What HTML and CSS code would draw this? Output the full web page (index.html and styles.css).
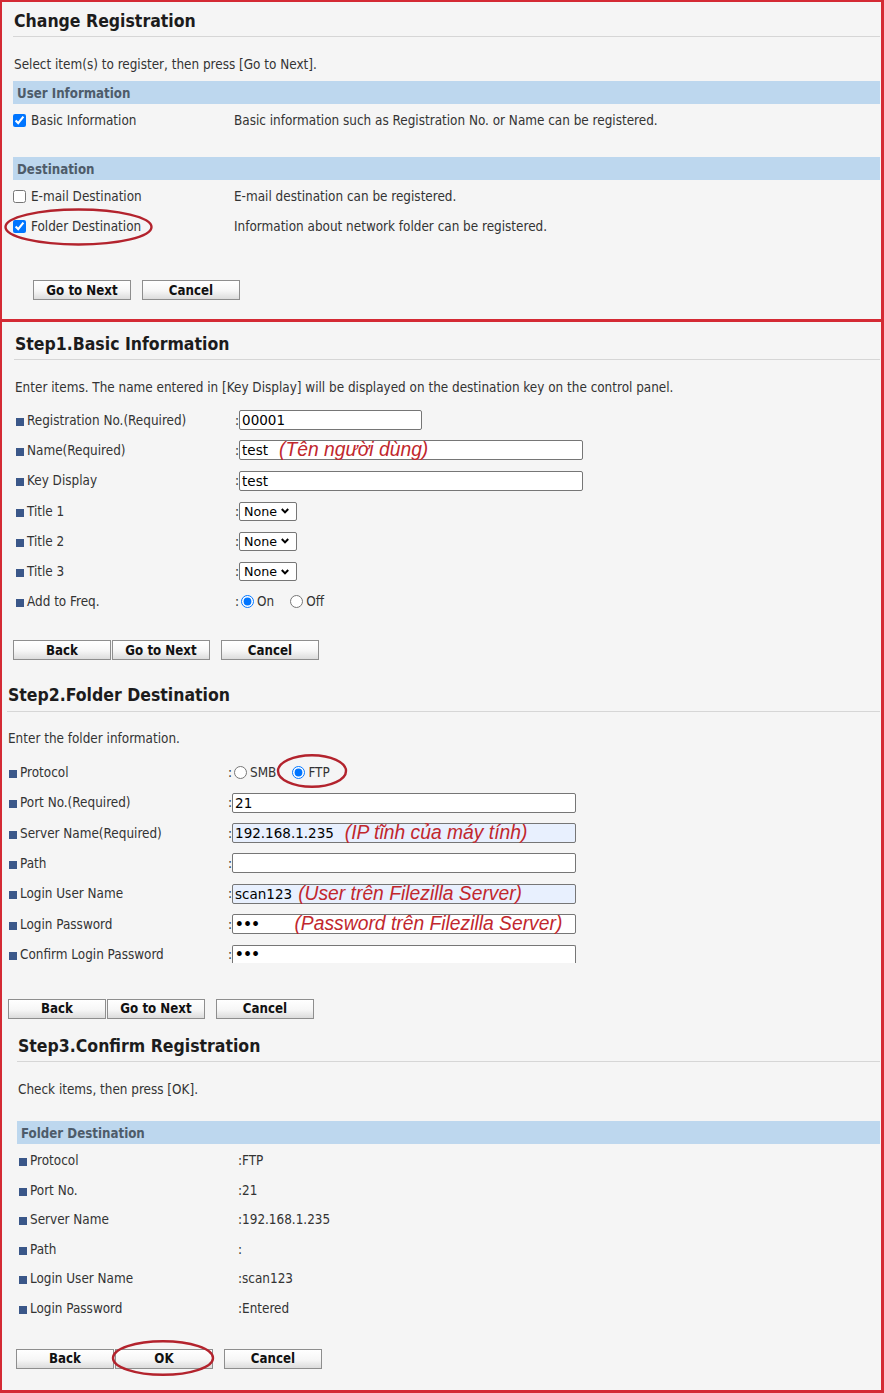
FILE: index.html
```html
<!DOCTYPE html>
<html lang="en">
<head>
<meta charset="utf-8">
<title>Change Registration</title>
<link rel="stylesheet" href="styles.css">
</head>
<body>
<div class="frame frame1">
  <div class="title t1">Change Registration</div>
  <div class="rule r1"></div>
  <div class="intro i1">Select item(s) to register, then press [Go to Next].</div>
  <div class="bar b1">User Information</div>
  <div class="sel-row first">
    <label class="sel-lbl"><input type="checkbox" checked>Basic Information</label>
    <span>Basic information such as Registration No. or Name can be registered.</span>
  </div>
  <div class="bar b2">Destination</div>
  <div class="sel-row first">
    <label class="sel-lbl"><input type="checkbox">E-mail Destination</label>
    <span>E-mail destination can be registered.</span>
  </div>
  <div class="sel-row">
    <label class="sel-lbl"><input type="checkbox" checked>Folder Destination</label>
    <span>Information about network folder can be registered.</span>
  </div>
  <div class="btns bt0">
    <button class="btn">Go to Next</button>
    <button class="btn gap">Cancel</button>
  </div>
  <svg class="ring ring1" viewBox="0 0 149 38"><ellipse cx="74.5" cy="19" rx="73" ry="17.5"/></svg>
</div>

<div class="frame frame2">
  <section class="step s1">
    <div class="title">Step1.Basic Information</div>
    <div class="rule"></div>
    <div class="intro">Enter items. The name entered in [Key Display] will be displayed on the destination key on the control panel.</div>
    <div class="rows rows1">
      <div class="f-row"><span class="lbl"><i class="sq"></i>Registration No.(Required)</span><span class="colon">:</span><span class="field w183">00001</span></div>
      <div class="f-row"><span class="lbl"><i class="sq"></i>Name(Required)</span><span class="colon">:</span><span class="field w344">test<span class="ann m11">(Tên người dùng)</span></span></div>
      <div class="f-row"><span class="lbl"><i class="sq"></i>Key Display</span><span class="colon">:</span><span class="field w344">test</span></div>
      <div class="f-row"><span class="lbl"><i class="sq"></i>Title 1</span><span class="colon">:</span><span class="select">None<svg viewBox="0 0 8 6"><path d="M0.8 1L4 4.4L7.2 1"/></svg></span></div>
      <div class="f-row"><span class="lbl"><i class="sq"></i>Title 2</span><span class="colon">:</span><span class="select">None<svg viewBox="0 0 8 6"><path d="M0.8 1L4 4.4L7.2 1"/></svg></span></div>
      <div class="f-row"><span class="lbl"><i class="sq"></i>Title 3</span><span class="colon">:</span><span class="select">None<svg viewBox="0 0 8 6"><path d="M0.8 1L4 4.4L7.2 1"/></svg></span></div>
      <div class="f-row"><span class="lbl"><i class="sq"></i>Add to Freq.</span><span class="colon">:</span><label class="radio"><input type="radio" name="freq" checked>On</label><label class="radio"><input type="radio" name="freq">Off</label></div>
    </div>
    <div class="btns bt1">
      <button class="btn">Back</button>
      <button class="btn adj">Go to Next</button>
      <button class="btn gap">Cancel</button>
    </div>
  </section>

  <section class="step s2">
    <div class="title">Step2.Folder Destination</div>
    <div class="rule"></div>
    <div class="intro">Enter the folder information.</div>
    <div class="rows rows2">
      <div class="f-row"><span class="lbl"><i class="sq"></i>Protocol</span><span class="colon">:</span><label class="radio"><input type="radio" name="proto">SMB</label><label class="radio"><input type="radio" name="proto" checked>FTP</label></div>
      <div class="f-row"><span class="lbl"><i class="sq"></i>Port No.(Required)</span><span class="colon">:</span><span class="field w344">21</span></div>
      <div class="f-row"><span class="lbl"><i class="sq"></i>Server Name(Required)</span><span class="colon">:</span><span class="field w344 auto">192.168.1.235<span class="ann m11">(IP tĩnh của máy tính)</span></span></div>
      <div class="f-row"><span class="lbl"><i class="sq"></i>Path</span><span class="colon">:</span><span class="field w344"></span></div>
      <div class="f-row"><span class="lbl"><i class="sq"></i>Login User Name</span><span class="colon">:</span><span class="field w344 auto">scan123<span class="ann m6">(User trên Filezilla Server)</span></span></div>
      <div class="f-row"><span class="lbl"><i class="sq"></i>Login Password</span><span class="colon">:</span><span class="field w344"><span class="dots">•••</span><span class="ann m35">(Password trên Filezilla Server)</span></span></div>
      <div class="f-row"><span class="lbl"><i class="sq"></i>Confirm Login Password</span><span class="colon">:</span><span class="field w344 clip"><span class="dots">•••</span></span></div>
    </div>
    <div class="btns bt2">
      <button class="btn">Back</button>
      <button class="btn adj">Go to Next</button>
      <button class="btn gap">Cancel</button>
    </div>
  </section>

  <section class="step s3">
    <div class="title">Step3.Confirm Registration</div>
    <div class="rule"></div>
    <div class="intro">Check items, then press [OK].</div>
    <div class="bar b3">Folder Destination</div>
    <div class="rows rows3">
      <div class="f-row"><span class="lbl"><i class="sq"></i>Protocol</span><span>:FTP</span></div>
      <div class="f-row"><span class="lbl"><i class="sq"></i>Port No.</span><span>:21</span></div>
      <div class="f-row"><span class="lbl"><i class="sq"></i>Server Name</span><span>:192.168.1.235</span></div>
      <div class="f-row"><span class="lbl"><i class="sq"></i>Path</span><span>:</span></div>
      <div class="f-row"><span class="lbl"><i class="sq"></i>Login User Name</span><span>:scan123</span></div>
      <div class="f-row"><span class="lbl"><i class="sq"></i>Login Password</span><span>:Entered</span></div>
    </div>
    <div class="btns bt3">
      <button class="btn">Back</button>
      <button class="btn adj">OK</button>
      <button class="btn gap">Cancel</button>
    </div>
  </section>
  <svg class="ring ring2" viewBox="0 0 70 34"><ellipse cx="35" cy="17" rx="34" ry="15.8"/></svg>
  <svg class="ring ring3" viewBox="0 0 102 36"><ellipse cx="51" cy="18" rx="50" ry="16.8"/></svg>
</div>
</body>
</html>
```
FILE: styles.css
```css
* { box-sizing: border-box; }
html, body { margin: 0; padding: 0; }
body {
  width: 884px;
  background: #f5f5f5;
  font-family: "DejaVu Sans Condensed", "DejaVu Sans", sans-serif;
  font-size: 13.4px;
  color: #333;
}

.frame {
  position: relative;
  display: flex;
  flex-direction: column;
  border: solid #d42a34;
  border-width: 2px 3px 3px 2px;
}
.frame1 { padding-bottom: 19px; }
.frame2 { border-top-width: 0; padding-bottom: 21px; }

.step { display: flex; flex-direction: column; }

.title {
  height: 22px;
  line-height: 22px;
  font-size: 17.5px;
  font-weight: bold;
  color: #1c1c1c;
  white-space: nowrap;
}
.rule { height: 1px; background: #d6d6d6; margin: 4px 1px 0 0; }
.intro { margin-top: 20px; height: 16px; line-height: 16px; white-space: nowrap; }

.bar {
  height: 23px;
  line-height: 23px;
  background: #bdd7ee;
  color: #4e5c6a;
  font-weight: bold;
  font-size: 13.2px;
  padding: 1px 0 0 4px;
  margin-right: 1px;
}

/* frame 1 */
.t1 { margin: 8px 0 0 12px; }
.r1 { margin-left: 11px; }
.i1 { margin-left: 12px; }
.b1 { margin: 8px 1px 0 11px; }
.b2 { margin: 22px 1px 0 11px; }
.sel-row { display: flex; align-items: center; height: 30px; padding-left: 11px; white-space: nowrap; }
.sel-row.first { margin-top: 1px; }
.sel-lbl { width: 221px; flex: none; display: flex; align-items: center; gap: 5px; }
.sel-lbl input { margin: 0; width: 13px; height: 13px; accent-color: #0075ff; }

/* steps */
.s1 { margin: 11px 0 0 12px; }
.s2 { margin: 24px 0 0 5px; }
.s3 { margin: 16px 0 0 15px; }
.step .title, .step .intro { margin-left: 1px; }
.s2 .rule { margin-top: 5px; }
.s2 .intro { margin-top: 19px; }
.b3 { margin-top: 23px; }

.rows { display: flex; flex-direction: column; padding-left: 2px; }
.rows1 { margin-top: 9px; }
.rows2 { margin-top: 10px; }
.rows3 { margin-top: 2px; }
.f-row { display: flex; align-items: center; height: 30.3px; white-space: nowrap; }
.rows2 .f-row { height: 30.4px; }
.rows3 .f-row { height: 29.6px; }

.lbl { width: 219px; flex: none; display: flex; align-items: center; }
.sq { display: block; width: 8px; height: 8px; background: #3a5789; margin: 3px 3px 0 0; flex: none; }
.colon { flex: none; }

.field {
  display: flex;
  align-items: center;
  flex: none;
  height: 20px;
  border: 1px solid #767676;
  border-radius: 2px;
  background: #fff;
  padding-left: 2px;
  font-family: "DejaVu Sans", sans-serif;
  font-size: 13.5px;
  color: #000;
  white-space: nowrap;
}
.w183 { width: 183px; }
.w344 { width: 344px; }
.auto { background: #e8f0fe; }
.clip { height: 18px; margin-bottom: 2px; border-bottom: 0; border-radius: 2px 2px 0 0; }
.dots { font-weight: bold; letter-spacing: -0.5px; }

.ann {
  font-family: "Liberation Sans", Arial, sans-serif;
  font-style: italic;
  font-size: 19.3px;
  color: #c1272d;
  line-height: 20px;
}
.m11 { margin-left: 11px; }
.m6 { margin-left: 6px; }
.m35 { margin-left: 35px; }

.select {
  display: flex;
  align-items: center;
  justify-content: space-between;
  flex: none;
  width: 58px;
  height: 19px;
  border: 1px solid #767676;
  border-radius: 2px;
  background: #fff;
  padding: 0 7px 0 4px;
  font-family: "DejaVu Sans", sans-serif;
  font-size: 12.7px;
  color: #000;
}
.select svg { width: 8px; height: 6px; fill: none; stroke: #000; stroke-width: 2; }

.radio { display: inline-flex; align-items: center; gap: 3px; }
.radio input { margin: 0 0 0 2px; width: 13px; height: 13px; accent-color: #0075ff; }
.radio + .radio { margin-left: 14px; }

.btns { display: flex; }
.btn {
  width: 98px;
  height: 20px;
  padding: 0;
  border: 1px solid #8e8e8e;
  border-radius: 0;
  background: linear-gradient(#ffffff 0%, #f6f6f6 55%, #dcdcdc 100%);
  font-family: "DejaVu Sans Condensed", "DejaVu Sans", sans-serif;
  font-weight: bold;
  font-size: 13.2px;
  color: #111;
}
.btn.adj { margin-left: 1px; }
.btn.gap { margin-left: 11px; }
.bt0 { margin: 39px 0 0 31px; }
.bt1 { margin: 23px 0 0 -1px; }
.bt2 { margin: 29px 0 0 1px; }
.bt3 { margin: 25.5px 0 0 -1px; }

.ring { position: absolute; fill: none; stroke: #b3232d; stroke-width: 2.4; overflow: visible; pointer-events: none; }
.ring1 { left: 2px; top: 206px; width: 149px; height: 38px; }
.ring2 { left: 275px; top: 432px; width: 70px; height: 34px; }
.ring3 { left: 110px; top: 1018px; width: 102px; height: 36px; }
```
